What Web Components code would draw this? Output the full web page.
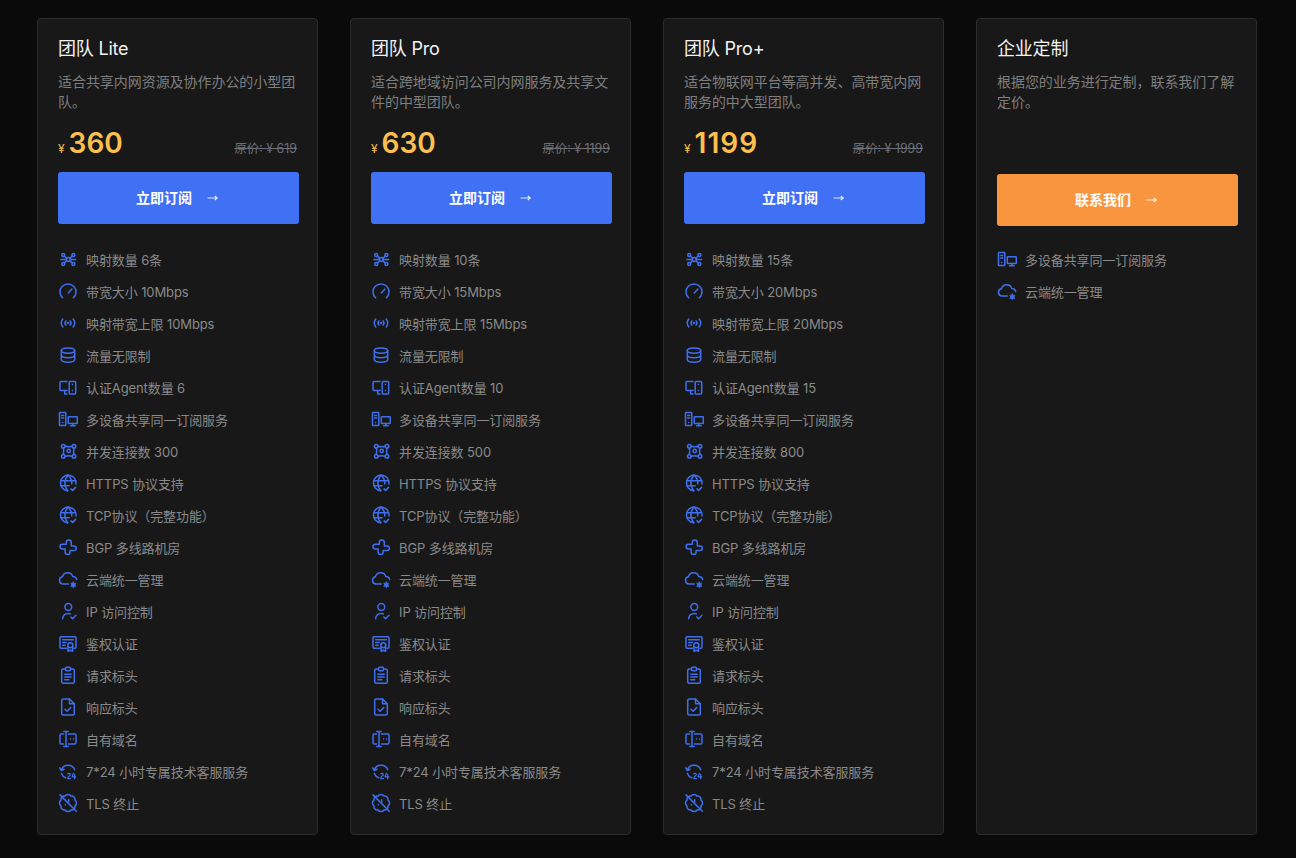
<!DOCTYPE html>
<html lang="zh-CN">
<head>
<meta charset="utf-8">
<title>套餐</title>
<style>
html, body { margin: 0; height: 100%; background: #0a0a0a; }
body { font-family: Inter, "Noto Sans CJK SC", sans-serif; overflow: hidden; }
</style>
</head>
<body>
<plan-grid id="grid"></plan-grid>
<script>
const ICONS = {
  nodes: '<circle cx="10.300" cy="10.500" r="2"/><circle cx="5.200" cy="6" r="1.500"/><circle cx="15.400" cy="6" r="1.500"/><circle cx="5.200" cy="15" r="1.500"/><circle cx="15.400" cy="15" r="1.500"/><path d="M6.400 7.100l2.400 2.200M14.200 7.100l-2.400 2.200M6.400 13.900l2.400-2.200M14.200 13.900l-2.400-2.200M3 10.500h5.300M12.300 10.500h5.300"/>',
  gauge: '<path d="M4.600 16.800A8 8 0 1 1 15.400 16.800"/><path d="M10.300 12l3.600-4"/>',
  signal: '<circle cx="10" cy="10" r=".5"/><path d="M7.900 7.900a3.200 3.200 0 0 0 0 4.200M12.100 7.900a3.200 3.200 0 0 1 0 4.200M4.800 6a6.500 6.500 0 0 0 0 8M15.200 6a6.500 6.500 0 0 1 0 8"/>',
  db: '<ellipse cx="10" cy="5.600" rx="6.700" ry="2.600"/><path d="M3.300 5.600v9c0 1.500 3 2.700 6.700 2.700s6.700-1.200 6.700-2.700v-9M3.300 10.100c0 1.500 3 2.700 6.700 2.700s6.700-1.200 6.700-2.700"/>',
  devices: '<path d="M9 4.500H3a1 1 0 0 0-1 1v7a1 1 0 0 0 1 1h6"/><path d="M6.700 13.500v3.500H9"/><rect x="11.200" y="4.500" width="6.500" height="12.500" rx="1"/><path d="M14.400 7.500h.1M14.400 13.500h.1"/>',
  desktop: '<rect x="1.500" y="3.500" width="6.300" height="13" rx=".5"/><path d="M3.700 6.500h2M3.700 9h2"/><path d="M4.600 13.500h.1"/><rect x="10.300" y="7.700" width="9" height="6.800" rx=".5"/><path d="M14.800 14.500v2.200M12.500 16.700h4.600"/>',
  connect: '<path d="M7.200 5.300Q10.700 6.300 14.100 5.300M16 7.200Q15 10.300 16 13.400M14.100 15.300Q10.700 14.300 7.200 15.300M5.300 13.400Q6.300 10.300 5.300 7.200"/><circle cx="5.300" cy="5.300" r="1.800"/><circle cx="16" cy="5.300" r="1.800"/><circle cx="5.300" cy="15.300" r="1.800"/><circle cx="16" cy="15.300" r="1.800"/><circle cx="10.700" cy="10" r="1.700"/>',
  globe: '<path d="M18 11A7.800 7.800 0 1 0 9.800 17.700"/><path d="M3 7.800h14.400M2.900 12.800h8.300M9.800 2.400c-3.900 4.200-3.900 11.100 0 15.300M10.600 2.400c2.300 2.500 3.300 5.700 3.200 8.700"/><path d="M13 15.900l1.600 1.500 3-3"/>',
  bgp: '<path d="M8.300 7.200V5.500a2.500 2.500 0 0 1 5 0V9H16a2.300 2.300 0 0 1 0 4.600h-3.900v1.500a2.500 2.500 0 0 1-5 0V12H4.400a2.300 2.300 0 0 1 0-4.800h3.900"/>',
  cloud: '<path d="M10.300 15H5a3.700 3.700 0 0 1-.6-7.300 5.400 5.400 0 0 1 10.400-.2 3.900 3.900 0 0 1 3.900 3"/><path d="M15.300 12.600l.9 1.600h1.800l-.9 1.700.9 1.600h-1.800l-.9 1.600-.9-1.600h-1.800l.9-1.600-.9-1.700h1.800z" fill="currentColor" stroke-width=".5"/>',
  user: '<circle cx="10.300" cy="6" r="3.400"/><path d="M4.700 17.800c0-3.300 2.400-5.300 5.600-5.300.8 0 1.500.1 2.100.4"/><path d="M12.800 16l1.800 1.700 3.400-3.400"/>',
  cert: '<path d="M8.500 15.300H3a1 1 0 0 1-1-1V4.700a1 1 0 0 1 1-1h14a1 1 0 0 1 1 1v9.600a1 1 0 0 1-1 1h-1"/><path d="M4.700 6.800h10.600M4.700 9.500h3.500M4.700 12.200h2.500"/><circle cx="12.300" cy="12.300" r="2.500"/><path d="M10 14v4.300l2.300-1 2.300 1V14"/>',
  clip: '<path d="M7.500 4H5.200a1.500 1.500 0 0 0-1.500 1.500v11.300a1.500 1.500 0 0 0 1.500 1.500h9.600a1.500 1.500 0 0 0 1.500-1.500V5.500A1.500 1.500 0 0 0 14.800 4h-2.300"/><rect x="7.500" y="2.300" width="5" height="3.400" rx="1"/><path d="M6.800 9.300h6.400M6.800 12h6.400M6.800 14.800h4"/>',
  filecheck: '<path d="M11.500 2H5.200a1.500 1.500 0 0 0-1.500 1.500v13A1.500 1.500 0 0 0 5.200 18h9.600a1.500 1.500 0 0 0 1.500-1.500V6.800z"/><path d="M11.500 2v4.800h4.800"/><path d="M7 12.300l2.100 1.900 3.600-3.600"/>',
  domain: '<path d="M5.500 5H3.300A1.300 1.300 0 0 0 2 6.300v7.400A1.300 1.300 0 0 0 3.300 15h2.200M10.500 5h6.200A1.300 1.300 0 0 1 18 6.300v7.400a1.300 1.300 0 0 1-1.300 1.300h-6.200"/><path d="M5.800 2.500h4.400M5.800 17.500h4.400M8 2.500v15"/><path d="M12.500 10h.1M15.500 10h.1"/>',
  clock24: '<path d="M16.700 8.700A7.200 7.200 0 0 0 3.300 9"/><path d="M1.800 6.800l1.500 2.700 2.700-1.300"/><path d="M3.400 12.500c.6 1.800 2.200 3.500 4.300 4.200"/><path d="M9.800 13c.3-.9 2.500-.9 2.500.4 0 1.300-2.500 2-2.500 4.200h2.700M15.400 12.400l-1.400 3.400h3.800M16.700 13.400v4.400" stroke-width="1.200"/>',
  tls: '<path d="M7.100 3A3.500 3.500 0 0 1 12.900 3 3.500 3.500 0 0 1 17 7.100 3.500 3.500 0 0 1 17 12.900 3.500 3.500 0 0 1 12.900 17 3.500 3.500 0 0 1 7.100 17 3.500 3.500 0 0 1 3 12.900 3.500 3.500 0 0 1 3 7.100 3.500 3.500 0 0 1 7.100 3z"/><path d="M10.700 6.800v2.200M7.300 11.800h.1"/><path d="M2 1.900l16.300 16.400"/>'
};

const FEATURES = (n, bw, peak, agent, conn) => [
  ["nodes", `映射数量 ${n}条`],
  ["gauge", `带宽大小 ${bw}Mbps`],
  ["signal", `映射带宽上限 ${peak}Mbps`],
  ["db", "流量无限制"],
  ["devices", `认证Agent数量 ${agent}`],
  ["desktop", "多设备共享同一订阅服务"],
  ["connect", `并发连接数 ${conn}`],
  ["globe", "HTTPS 协议支持"],
  ["globe", "TCP协议（完整功能）"],
  ["bgp", "BGP 多线路机房"],
  ["cloud", "云端统一管理"],
  ["user", "IP 访问控制"],
  ["cert", "鉴权认证"],
  ["clip", "请求标头"],
  ["filecheck", "响应标头"],
  ["domain", "自有域名"],
  ["clock24", "7*24 小时专属技术客服服务"],
  ["tls", "TLS 终止"]
];

const PLANS = [
  { name: "团队 Lite", desc: "适合共享内网资源及协作办公的小型团队。", price: "360", old: "原价: ¥ 619", action: "立即订阅", features: FEATURES("6", "10", "10", "6", "300") },
  { name: "团队 Pro", desc: "适合跨地域访问公司内网服务及共享文件的中型团队。", price: "630", old: "原价: ¥ 1199", action: "立即订阅", features: FEATURES("10", "15", "15", "10", "500") },
  { name: "团队 Pro+", desc: "适合物联网平台等高并发、高带宽内网服务的中大型团队。", price: "1199", priceSpacing: "1px", old: "原价: ¥ 1999", action: "立即订阅", features: FEATURES("15", "20", "20", "15", "800") },
  { name: "企业定制", desc: "根据您的业务进行定制，联系我们了解定价。", action: "联系我们", contact: true, features: [["desktop", "多设备共享同一订阅服务"], ["cloud", "云端统一管理"]] }
];

class PlanFeature extends HTMLElement {
  connectedCallback() {
    this.attachShadow({ mode: "open" });
    this.shadowRoot.innerHTML = `
    <style>
    :host { display: flex; align-items: center; height: 32px; gap: 8px; color: #8a8a8a; font-size: 13px; letter-spacing: -0.1px; }
    svg { width: 20px; height: 20px; flex: none; fill: none; stroke: #3f6ff0; color: #3f6ff0; stroke-width: 1.5; stroke-linecap: round; stroke-linejoin: round; }
    </style>
    <svg viewBox="0 0 20 20">${ICONS[this.getAttribute("icon")]}</svg>
    <slot></slot>
    `;
  }
}
customElements.define("plan-feature", PlanFeature);

class PlanButton extends HTMLElement {
  connectedCallback() {
    this.attachShadow({ mode: "open" });
    this.shadowRoot.innerHTML = `
    <style>
    :host { display: flex; box-sizing: border-box; align-items: center; justify-content: center; gap: 14px; height: 52px; padding: 0 1px 2px 0; border-radius: 3px; background: #4070f4; color: #fff; font-size: 14px; font-weight: 600; }
    :host([contact]) { background: #f9953e; }
    svg { width: 14px; height: 14px; margin-top: 2px; fill: none; stroke: currentColor; stroke-width: 1.2; opacity: .85; }
    </style>
    <slot></slot>
    <svg viewBox="0 0 14 14"><path d="M1.500 7h9.500M8.800 5l2.400 2-2.400 2"/></svg>
    `;
  }
}
customElements.define("plan-button", PlanButton);

class PlanCard extends HTMLElement {
  connectedCallback() {
    this.attachShadow({ mode: "open" });
    this.shadowRoot.innerHTML = `
    <style>
    :host { display: flex; flex-direction: column; box-sizing: border-box; height: 817px; padding: 18px 18px 0 20px; background: #181818; border: 1px solid #2b2b2b; border-radius: 4px; }
    .title { color: #f2f2f2; font-size: 18px; line-height: 24px; font-weight: 400; letter-spacing: -0.2px; }
    .desc { margin-top: 11px; color: #7f7f7f; font-size: 14px; line-height: 20px; height: 40px; letter-spacing: -0.05px; }
    .price { display: flex; align-items: baseline; height: 40px; margin-top: 11px; }
    .cur { color: #f5c050; font-size: 12px; margin-right: 4px; }
    .num { color: #fcc04f; font-size: 28px; line-height: 40px; font-weight: 600; }
    .old { margin: 0 2px 0 auto; color: #6c7079; font-size: 12.4px; text-decoration: line-through; }
    .action { margin: 9px 0 19px; }
    :host([contact]) .price { height: 42px; }
    :host([contact]) .action { margin-bottom: 17px; }
    </style>
    <div class="title"><slot name="title"></slot></div>
    <div class="desc"><slot name="desc"></slot></div>
    <div class="price">
      <span class="cur"><slot name="cur"></slot></span>
      <span class="num"><slot name="num"></slot></span>
      <span class="old"><slot name="old"></slot></span>
    </div>
    <div class="action"><slot name="action"></slot></div>
    <slot></slot>
    `;
  }
}
customElements.define("plan-card", PlanCard);

class PlanGrid extends HTMLElement {
  connectedCallback() {
    this.attachShadow({ mode: "open" });
    this.shadowRoot.innerHTML = `
    <style>
    :host { display: grid; grid-template-columns: repeat(4, 281px); gap: 32px; padding: 18px 0 0 37px; }
    </style>
    <slot></slot>
    `;
    PLANS.forEach(p => {
      const card = document.createElement("plan-card");
      if (p.contact) card.setAttribute("contact", "");
      const price = p.contact ? "" : `
        <span slot="cur">¥</span>
        <span slot="num" style="letter-spacing: ${p.priceSpacing || 0}">${p.price}</span>
        <span slot="old">${p.old}</span>`;
      card.innerHTML = `
        <span slot="title">${p.name}</span>
        <span slot="desc">${p.desc}</span>
        ${price}
        <plan-button slot="action" ${p.contact ? "contact" : ""}>${p.action}</plan-button>
        ${p.features.map(f => `<plan-feature icon="${f[0]}">${f[1]}</plan-feature>`).join("")}`;
      this.appendChild(card);
    });
  }
}
customElements.define("plan-grid", PlanGrid);
</script>
</body>
</html>
